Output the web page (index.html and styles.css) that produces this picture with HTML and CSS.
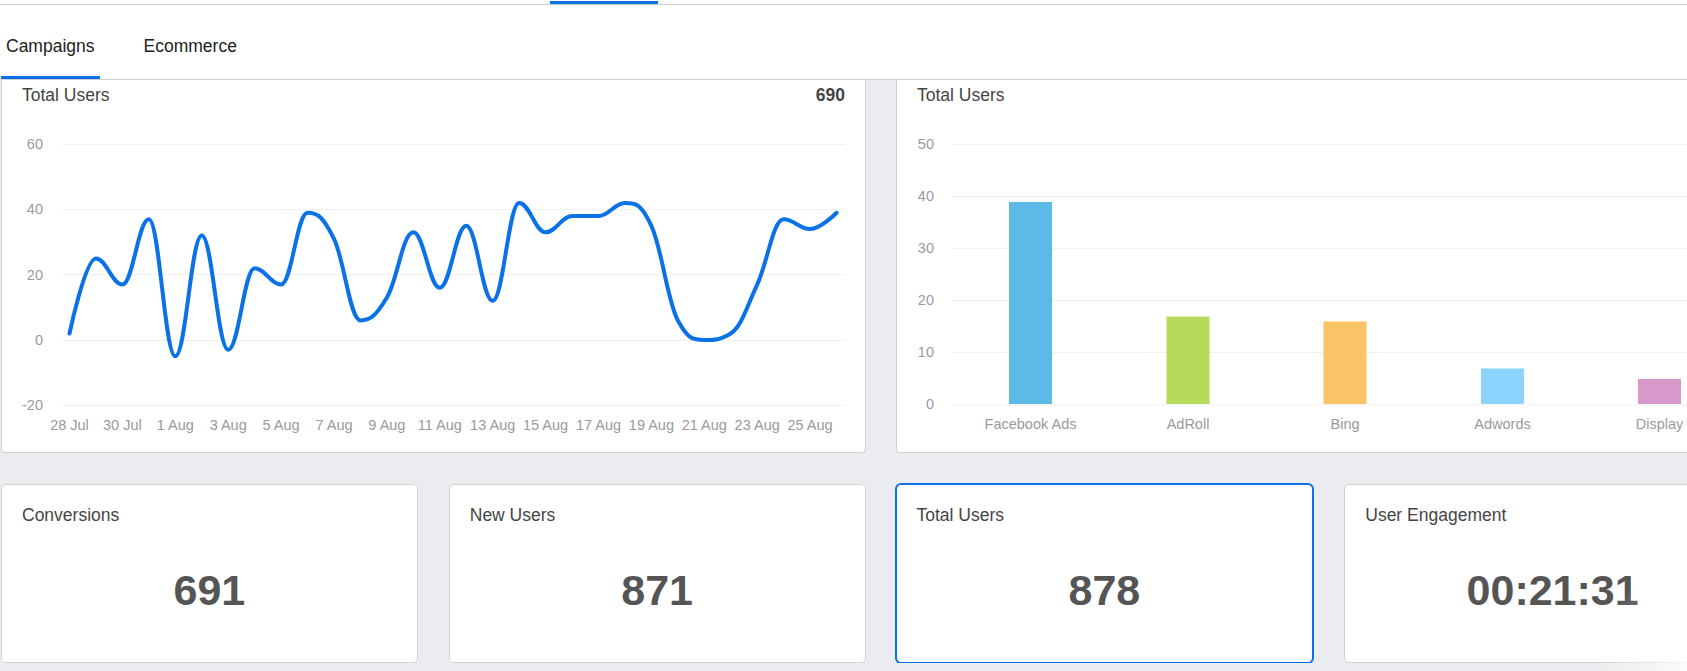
FILE: index.html
```html
<!DOCTYPE html>
<html lang="en">
<head>
<meta charset="utf-8">
<title>Campaigns</title>
<link rel="stylesheet" href="styles.css">
</head>
<body>
<div class="page">
  <div class="topstrip"><div class="indicator"></div></div>
  <nav class="tabbar">
    <div class="tab active">Campaigns</div>
    <div class="tab">Ecommerce</div>
  </nav>
  <main class="content">
    <section class="charts">
      <div class="card chart-card">
        <div class="card-head"><span class="card-title">Total Users</span><span class="card-total">690</span></div>
        <svg class="chart" width="863" height="344" viewBox="2 108 863 344">
          <g class="grid">
            <line x1="62" x2="845" y1="144.5" y2="144.5"/>
            <line x1="62" x2="845" y1="209.5" y2="209.5"/>
            <line x1="62" x2="845" y1="274.5" y2="274.5"/>
            <line x1="62" x2="845" y1="340.5" y2="340.5"/>
            <line x1="62" x2="845" y1="405.5" y2="405.5"/>
          </g>
          <g class="axis ylab">
            <text x="43" y="149">60</text>
            <text x="43" y="214">40</text>
            <text x="43" y="280">20</text>
            <text x="43" y="345">0</text>
            <text x="43" y="410">-20</text>
          </g>
          <g class="axis xlab">
            <text x="69.5" y="430">28 Jul</text>
            <text x="122.4" y="430">30 Jul</text>
            <text x="175.3" y="430">1 Aug</text>
            <text x="228.2" y="430">3 Aug</text>
            <text x="281.1" y="430">5 Aug</text>
            <text x="334" y="430">7 Aug</text>
            <text x="386.9" y="430">9 Aug</text>
            <text x="439.8" y="430">11 Aug</text>
            <text x="492.7" y="430">13 Aug</text>
            <text x="545.6" y="430">15 Aug</text>
            <text x="598.5" y="430">17 Aug</text>
            <text x="651.4" y="430">19 Aug</text>
            <text x="704.3" y="430">21 Aug</text>
            <text x="757.2" y="430">23 Aug</text>
            <text x="810.1" y="430">25 Aug</text>
          </g>
          <path id="users-line" class="series" d="M69.5 333"/>
        </svg>
      </div>
      <div class="card chart-card">
        <div class="card-head"><span class="card-title">Total Users</span></div>
        <svg class="chart" width="863" height="344" viewBox="897 108 863 344">
          <g class="grid">
            <line x1="952" x2="1740" y1="144.5" y2="144.5"/>
            <line x1="952" x2="1740" y1="196.5" y2="196.5"/>
            <line x1="952" x2="1740" y1="248.5" y2="248.5"/>
            <line x1="952" x2="1740" y1="300.5" y2="300.5"/>
            <line x1="952" x2="1740" y1="352.5" y2="352.5"/>
            <line x1="952" x2="1740" y1="405" y2="405"/>
          </g>
          <g class="axis ylab">
            <text x="934" y="149">50</text>
            <text x="934" y="201">40</text>
            <text x="934" y="253">30</text>
            <text x="934" y="305">20</text>
            <text x="934" y="357">10</text>
            <text x="934" y="409">0</text>
          </g>
          <g class="bars">
            <rect x="1009" y="202" width="43" height="202" fill="#5dbae6"/>
            <rect x="1166.5" y="316.5" width="43" height="87.5" fill="#b7da5a"/>
            <rect x="1323.5" y="321.5" width="43" height="82.5" fill="#fac466"/>
            <rect x="1481" y="368.5" width="43" height="35.5" fill="#8dd3ff"/>
            <rect x="1638" y="379" width="43" height="25" fill="#d799cb"/>
          </g>
          <g class="axis xlab">
            <text x="1030.5" y="429">Facebook Ads</text>
            <text x="1188" y="429">AdRoll</text>
            <text x="1345" y="429">Bing</text>
            <text x="1502.5" y="429">Adwords</text>
            <text x="1659.5" y="429">Display</text>
          </g>
        </svg>
      </div>
    </section>
    <section class="stats">
      <div class="card stat">
        <div class="stat-title">Conversions</div>
        <div class="stat-value">691</div>
      </div>
      <div class="card stat">
        <div class="stat-title">New Users</div>
        <div class="stat-value">871</div>
      </div>
      <div class="card stat selected">
        <div class="stat-title">Total Users</div>
        <div class="stat-value">878</div>
      </div>
      <div class="card stat">
        <div class="stat-title">User Engagement</div>
        <div class="stat-value">00:21:31</div>
      </div>
    </section>
  </main>
</div>
<div class="glow"></div>
<script src="script.js"></script>
</body>
</html>
```
FILE: styles.css
```css
html, body {
  margin: 0;
  padding: 0;
  overflow: hidden;
  background: #ebecef;
}
body {
  font-family: "Liberation Sans", Arial, sans-serif;
  color: #444;
}
.page {
  width: 1800px;
}
.topstrip {
  box-sizing: border-box;
  height: 5px;
  padding: 1px 0 0 550px;
  border-bottom: 1px solid #c9cdd2;
  background: #fff;
}
.indicator {
  width: 108px;
  height: 3px;
  background: #0a72e6;
}
.tabbar {
  box-sizing: border-box;
  height: 75px;
  padding-top: 11px;
  display: flex;
  gap: 39px;
  background: #fff;
  border-bottom: 1px solid #cdd0d4;
}
.tab {
  display: flex;
  align-items: center;
  padding: 0 5px;
  font-size: 17.5px;
  color: #222;
  border-bottom: 3px solid transparent;
}
.tab.active {
  margin-left: 1px;
  border-bottom-color: #0a72e6;
}
.content {
  padding-left: 1px;
  width: 1760px;
}
.card {
  box-sizing: border-box;
  background: #fff;
  border: 1px solid #cfd2d6;
  border-radius: 4px;
}
.charts {
  display: grid;
  grid-template-columns: 865px 865px;
  gap: 30px;
}
.chart-card {
  height: 373px;
  border-top: none;
  border-radius: 0 0 4px 4px;
}
.card-head {
  box-sizing: border-box;
  height: 28px;
  padding: 5px 20px 0 20px;
  display: flex;
  justify-content: space-between;
  font-size: 17.5px;
  line-height: 20px;
}
.card-title {
  color: #454545;
}
.card-total {
  font-weight: bold;
  color: #444;
}
.chart {
  display: block;
}
.grid line {
  stroke: #f0f0f0;
  stroke-width: 1;
}
.axis text {
  font-family: "Liberation Sans", Arial, sans-serif;
  font-size: 14.5px;
  fill: #9a9a9a;
}
.ylab text {
  text-anchor: end;
}
.xlab text {
  text-anchor: middle;
}
.series {
  fill: none;
  stroke: #0a72e6;
  stroke-width: 4;
  stroke-linejoin: round;
  stroke-linecap: round;
}
.stats {
  margin-top: 31px;
  display: grid;
  grid-template-columns: repeat(4, 1fr);
  gap: 31px;
}
.stat {
  height: 179px;
  padding: 20px 20px 0 20px;
  border-radius: 5px;
}
.stat.selected {
  border-color: #0a72e6;
  box-shadow: 0 0 0 1px #0a72e6;
  margin-left: -1px;
}
.stat-title {
  font-size: 17.5px;
  line-height: 20px;
  color: #454545;
}
.stat-value {
  margin-top: 40px;
  text-align: center;
  font-size: 43px;
  line-height: 50px;
  font-weight: bold;
  color: #555;
}
.glow {
  position: fixed;
  right: 0;
  bottom: 0;
  width: 110px;
  height: 110px;
  pointer-events: none;
  background: radial-gradient(circle at 100% 100%, rgba(255,255,255,0.85) 0, rgba(255,255,255,0.4) 40px, rgba(255,255,255,0) 100px);
}
```
FILE: script.js
```js
(function () {
  var values = [2, 25, 17, 37, -5, 32, -3, 22, 17, 39, 31, 6, 13, 33, 16, 35, 12, 42, 33, 38, 38, 42, 35, 6, 0, 2, 17, 37, 34, 39];
  var pts = values.map(function (v, i) {
    return { x: 69.5 + i * 26.45, y: 340 - v * 3.2625 };
  });
  var s = 1.5, den = s + 1;
  var d = 'M' + pts[0].x.toFixed(2) + ' ' + pts[0].y.toFixed(2);
  for (var i = 1; i < pts.length; i++) {
    var p = pts[i], last = pts[i - 1], next = pts[i + 1];
    var lcx, lcy, rcx, rcy;
    if (next) {
      lcx = (s * p.x + last.x) / den;
      lcy = (s * p.y + last.y) / den;
      rcx = (s * p.x + next.x) / den;
      rcy = (s * p.y + next.y) / den;
      var corr = ((rcy - lcy) * (rcx - p.x)) / (rcx - lcx) + p.y - rcy;
      lcy += corr; rcy += corr;
      if (lcy > last.y && lcy > p.y) { lcy = Math.max(last.y, p.y); rcy = 2 * p.y - lcy; }
      else if (lcy < last.y && lcy < p.y) { lcy = Math.min(last.y, p.y); rcy = 2 * p.y - lcy; }
      if (rcy > next.y && rcy > p.y) { rcy = Math.max(next.y, p.y); lcy = 2 * p.y - rcy; }
      else if (rcy < next.y && rcy < p.y) { rcy = Math.min(next.y, p.y); lcy = 2 * p.y - rcy; }
      p.rcx = rcx; p.rcy = rcy;
    } else {
      lcx = p.x; lcy = p.y;
    }
    var c1x = last.rcx !== undefined ? last.rcx : last.x;
    var c1y = last.rcy !== undefined ? last.rcy : last.y;
    d += ' C' + c1x.toFixed(2) + ' ' + c1y.toFixed(2) + ' ' + lcx.toFixed(2) + ' ' + lcy.toFixed(2) + ' ' + p.x.toFixed(2) + ' ' + p.y.toFixed(2);
  }
  document.getElementById('users-line').setAttribute('d', d);
})();
```
